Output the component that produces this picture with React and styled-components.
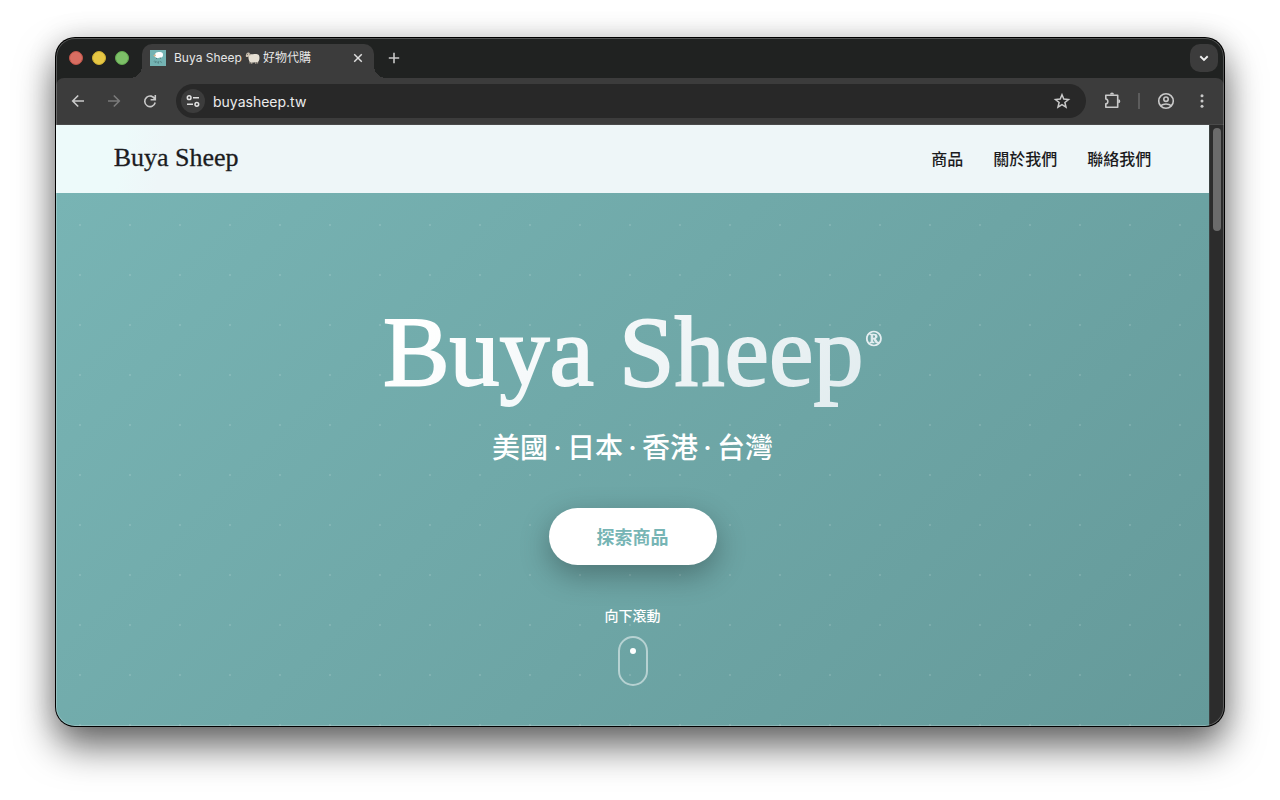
import React from "react";
import styled, { createGlobalStyle } from "styled-components";

const GlobalStyle = createGlobalStyle`
  *, *::before, *::after { box-sizing: border-box; }
  body {
    margin: 0;
    background: #fff;
    font-family: Inter, "Noto Sans CJK TC", sans-serif;
  }
  button, input { font: inherit; color: inherit; border: 0; background: none; padding: 0; margin: 0; }
  a { color: inherit; text-decoration: none; }
`;

const Desktop = styled.div`
  min-height: 100vh;
  padding: 38px 56px 74px;
  display: flex;
`;

const Window = styled.div`
  flex: 1;
  min-width: 0;
  display: flex;
  flex-direction: column;
  position: relative;
  overflow: hidden;
  border-radius: 19px;
  background: #202221;
  box-shadow: 0 0 0 1px #000, 0 20px 38px rgba(0, 0, 0, 0.6), 0 0 30px rgba(0, 0, 0, 0.14);

  &::after {
    content: "";
    position: absolute;
    inset: 0;
    border-radius: inherit;
    box-shadow: inset 0 0 0 1px rgba(255, 255, 255, 0.24);
    pointer-events: none;
  }
`;

const TabStrip = styled.div`
  height: 40px;
  display: flex;
  align-items: flex-end;
  padding: 0 6px 0 13px;
  flex: none;
`;

const TrafficLights = styled.div`
  display: flex;
  gap: 9px;
  height: 40px;
  align-items: center;
`;

const Light = styled.button`
  width: 14px;
  height: 14px;
  border-radius: 50%;
  background: ${(p) => p.$fill};
  border: 1px solid ${(p) => p.$edge};
`;

const Tab = styled.div`
  position: relative;
  width: 232px;
  height: 34px;
  margin-left: 13px;
  padding: 0 8px;
  display: flex;
  align-items: center;
  border-radius: 10px 10px 0 0;
  background: #3c3c3c;
  color: #e6e6e6;
  font-size: 12px;
  padding-bottom: 6px;

  &::before, &::after {
    content: "";
    position: absolute;
    bottom: 0;
    width: 12px;
    height: 12px;
  }
  &::before { left: -12px; background: radial-gradient(circle at 0 0, transparent 12px, #3c3c3c 12px); }
  &::after { right: -12px; background: radial-gradient(circle at 100% 0, transparent 12px, #3c3c3c 12px); }
`;

const TabTitle = styled.span`
  flex: 1;
  margin-left: 8px;
  display: flex;
  align-items: center;
  gap: 3px;
  white-space: nowrap;
  line-height: 16px;
`;

const IconButton = styled.button`
  flex: none;
  width: ${(p) => p.$size || 20}px;
  height: ${(p) => p.$size || 20}px;
  display: grid;
  place-items: center;
  color: ${(p) => p.$tone || "#c9c9c9"};
  background: ${(p) => p.$bg || "none"};
  border-radius: ${(p) => p.$radius || "50%"};
  svg { display: block; }
`;

const NewTab = styled.div`
  height: 40px;
  display: flex;
  align-items: center;
  margin-left: 10px;
  flex: 1;
`;

const TabMenu = styled.div`
  height: 40px;
  display: flex;
  align-items: center;
`;

const Toolbar = styled.div`
  height: 47px;
  flex: none;
  display: flex;
  align-items: center;
  padding: 0 12px;
  border-radius: 8px 8px 0 0;
  background: #3c3c3c;
  border-bottom: 1px solid #4a4a4a;
`;

const HistoryControls = styled.div`
  display: flex;
  gap: 16px;
`;

const Omnibox = styled.label`
  flex: 1;
  height: 34px;
  margin-left: 16px;
  padding: 0 14px 0 5px;
  display: flex;
  align-items: center;
  border-radius: 17px;
  background: #282828;
  color: #ececec;
`;

const Address = styled.input`
  flex: 1;
  min-width: 0;
  margin-left: 8px;
  height: 20px;
  font-size: 14px;
  outline: 0;
`;

const Actions = styled.div`
  display: flex;
  align-items: center;
  gap: 16px;
  margin-left: 16px;
`;

const Divider = styled.span`
  width: 2px;
  height: 16px;
  background: #5c5c5c;
`;

const Viewport = styled.div`
  flex: 1;
  display: flex;
`;

const Page = styled.div`
  flex: 1;
  min-width: 0;
  display: flex;
  flex-direction: column;
`;

const ScrollTrack = styled.div`
  width: 15px;
  padding: 3px 3px 0;
  background: #2c2c2c;
  border-left: 1px solid #3c4242;
`;

const ScrollThumb = styled.div`
  height: 103px;
  width: 8px;
  border-radius: 4px;
  background: #6b6b6b;
`;

const SiteHeader = styled.header`
  height: 68px;
  flex: none;
  padding: 0 5% 2px;
  display: flex;
  align-items: center;
  justify-content: space-between;
  background: linear-gradient(100deg, #edfafa 0, #edfafa 70px, #eef6f8 110px);
  color: #1c1c1e;
`;

const Brand = styled.a`
  font-family: "Liberation Serif", serif;
  font-size: 26px;
  line-height: 32px;
  -webkit-text-stroke: 0.3px currentColor;
`;

const SiteNav = styled.nav`
  display: flex;
  gap: 30px;
  padding-top: 2px;
  font-size: 16px;
  line-height: 24px;
  font-weight: 500;
`;

const Hero = styled.main`
  flex: 1;
  padding: 100px 24px 39px;
  display: flex;
  flex-direction: column;
  align-items: center;
  color: #fff;
  background:
    radial-gradient(circle, rgba(255, 255, 255, 0.12) 1px, transparent 1px) -1px 7px / 50px 50px,
    linear-gradient(135deg, #78b4b4 0%, #659a9a 100%);
`;

const HeroTitle = styled.h1`
  margin: 0;
  display: flex;
  align-items: flex-start;
  gap: 2px;
  font-family: "Liberation Serif", serif;
  font-weight: 400;
  font-size: 100px;
  line-height: 118px;
  white-space: nowrap;
  color: transparent;
  background: linear-gradient(135deg, #ffffff 10%, #e0ebee 100%);
  -webkit-background-clip: text;
  background-clip: text;
  -webkit-text-stroke: 2px transparent;
`;

const Registered = styled.span`
  margin-top: 34px;
  font-size: 22px;
  line-height: 24px;
  -webkit-text-stroke: 1px transparent;
`;

const Regions = styled.p`
  margin: 17px 0 40px;
  display: flex;
  font-size: 28px;
  line-height: 40px;
  font-weight: 500;
`;

const Dot = styled.span`
  width: 19px;
  display: flex;
  justify-content: center;
  white-space: pre;
`;

const ExploreButton = styled.button`
  height: 57px;
  padding: 0 48px 2px;
  border-radius: 29px;
  background: #fff;
  color: #77b5b5;
  font-size: 18px;
  font-weight: 700;
  box-shadow: 0 10px 30px rgba(0, 0, 0, 0.3);
`;

const ScrollHint = styled.a`
  margin-top: 41px;
  display: flex;
  flex-direction: column;
  align-items: center;
  gap: 10px;
  font-size: 14px;
  line-height: 20px;
  font-weight: 500;
`;

const Mouse = styled.span`
  width: 30px;
  height: 50px;
  padding-top: 10px;
  display: flex;
  justify-content: center;
  border: 2px solid rgba(255, 255, 255, 0.5);
  border-radius: 15px;
`;

const Wheel = styled.span`
  width: 6px;
  height: 6px;
  border-radius: 50%;
  background: #fff;
`;

const Icon = ({ size = 20, w = 1.6, children }) => (
  <svg width={size} height={size} viewBox="0 0 20 20" fill="none" stroke="currentColor" strokeWidth={w} aria-hidden="true">
    {children}
  </svg>
);

const Favicon = () => (
  <svg width="16" height="16" viewBox="0 0 16 16" aria-hidden="true">
    <rect width="16" height="16" fill="#74b3b3" />
    <path d="M5 4.2C5.6 2.2 8 1.6 9.500 2.100c2-.3 3.700 1 3.500 2.600.2 1.900-1.300 3-3 2.900-1.400.7-3 .6-4-.2C4.800 7.200 4.300 5.500 5 4.200Z" fill="#fff" />
    <path d="M3.300 5.200 5.500 4.300 6 6l-1.700.8Z" fill="#d9b48d" />
    <path d="M6.500 8v1M10.500 7.800v1" stroke="#4b6667" strokeWidth=".7" />
    <path d="M4 11.500c1-1.500 2 .2 1 1 1.200-.2 1.500-1 2-.6.500.6 1.500.4 1.800-.4l-.6 2.300M10 12c.8-.7 1.700-.4 1.500.7" fill="none" stroke="#4b7778" strokeWidth=".7" />
  </svg>
);

const SheepIcon = () => (
  <svg width="15" height="14" viewBox="0 0 15 14" role="img" aria-label="ewe">
    <path d="M5 8.500v4M6.800 9v4M10.800 9v4M12.600 8.500v4" stroke="#aaa092" strokeWidth="1.100" />
    <path d="M3.600 4.200C5 2.700 7 3.600 8 3.300c2-.7 4.700-.4 5.700.7 1.200 1.400.9 5-.1 6.300-1 1.300-2.500.7-3.500 1-1.700.4-3.900.5-5-.4C3.500 9.600 3.200 6.400 3.600 4.200Z" fill="#e5dfd3" />
    <path d="M.8 4.400C1.200 2.800 2 1.500 3.300 1.500c1.400 0 2.200 1.200 2 2.500-.4 1.300-1.600 1.500-2.500 1.700-.9.500-2.200.2-2-1.300Z" fill="#cfc5b6" />
    <path d="M3.800 2.500 5.300 3.600" stroke="#8f8172" />
    <circle cx="2.300" cy="3.300" r=".5" fill="#3b3632" />
  </svg>
);

export default function App() {
  return (
    <>
      <GlobalStyle />
      <Desktop>
        <Window>
          <TabStrip>
            <TrafficLights>
              <Light aria-label="Close window" $fill="#d86e62" $edge="#c05449" />
              <Light aria-label="Minimise window" $fill="#e6c744" $edge="#cdae32" />
              <Light aria-label="Zoom window" $fill="#7dc068" $edge="#62a84f" />
            </TrafficLights>
            <Tab>
              <Favicon />
              <TabTitle>
                <span>Buya Sheep</span>
                <SheepIcon />
                <span>好物代購</span>
              </TabTitle>
              <IconButton aria-label="Close tab" $size={16} $tone="#e0e0e0">
                <Icon size={16} w={1.8}><path d="m5.300 5.300 9.400 9.400m0-9.400-9.400 9.400" /></Icon>
              </IconButton>
            </Tab>
            <NewTab>
              <IconButton aria-label="New tab">
                <Icon><path d="M10 4.800v10.400M4.800 10h10.400" /></Icon>
              </IconButton>
            </NewTab>
            <TabMenu>
              <IconButton aria-label="Search tabs" $size={28} $bg="#3c3c3c" $radius="10px" $tone="#f0f0f0">
                <Icon w={1.900}><path d="m6.300 8.300 3.700 3.600 3.700-3.600" /></Icon>
              </IconButton>
            </TabMenu>
          </TabStrip>

          <Toolbar>
            <HistoryControls>
              <IconButton aria-label="Back"><Icon><path d="M16 10H4.800M10.200 4.500 4.700 10l5.500 5.500" /></Icon></IconButton>
              <IconButton aria-label="Forward" $tone="#7a7a7a"><Icon><path d="M4 10h11.200M9.800 4.500l5.500 5.500-5.500 5.500" /></Icon></IconButton>
              <IconButton aria-label="Reload">
                <Icon><path d="M14.900 8.200A5.300 5.300 0 1 0 15.200 11.500M15.300 4v4.700h-4.700" /></Icon>
              </IconButton>
            </HistoryControls>
            <Omnibox>
              <IconButton aria-label="Site information" $size={24} $bg="#3c3c3c" $tone="#e0e0e0">
                <Icon size={16} w={1.900}>
                  <circle cx="5.200" cy="5.800" r="2.300" />
                  <path d="M10 5.800h7.500M2.500 14.200H10" />
                  <circle cx="14.800" cy="14.200" r="2.300" />
                </Icon>
              </IconButton>
              <Address aria-label="Address" defaultValue="buyasheep.tw" />
              <IconButton aria-label="Bookmark this page">
                <Icon w={1.500}><path d="m10 3.800 1.800 4.300 4.700.4-3.600 3 1.100 4.600-4-2.500-4 2.500 1.100-4.600-3.600-3 4.700-.4Z" /></Icon>
              </IconButton>
            </Omnibox>
            <Actions>
              <IconButton aria-label="Extensions">
                <Icon w={1.600}>
                  <path d="M3.800 4.200h11.900v12.100H3.800v-3.400c2.700-.4 2.700-4.500 0-4.900Z" strokeLinejoin="round" />
                  <path d="M8 3.600a2 2.100 0 0 1 4 0ZM16.300 8.300a2 2 0 0 1 0 4Z" fill="currentColor" stroke="none" />
                </Icon>
              </IconButton>
              <Divider />
              <IconButton aria-label="Profile">
                <Icon w={1.600}>
                  <circle cx="10" cy="10" r="7.300" />
                  <circle cx="10" cy="8.200" r="2.200" />
                  <path d="M4.800 14.700c2.800-2.300 7.600-2.300 10.400 0" />
                </Icon>
              </IconButton>
              <IconButton aria-label="Browser menu">
                <Icon>
                  <g fill="currentColor" stroke="none">
                    <circle cx="10" cy="4.800" r="1.500" /><circle cx="10" cy="10" r="1.500" /><circle cx="10" cy="15.200" r="1.500" />
                  </g>
                </Icon>
              </IconButton>
            </Actions>
          </Toolbar>

          <Viewport>
            <Page>
              <SiteHeader>
                <Brand href="#home">Buya Sheep</Brand>
                <SiteNav>
                  <a href="#products">商品</a>
                  <a href="#about">關於我們</a>
                  <a href="#contact">聯絡我們</a>
                </SiteNav>
              </SiteHeader>
              <Hero>
                <HeroTitle>Buya Sheep<Registered>®</Registered></HeroTitle>
                <Regions>
                  美國<Dot> · </Dot>日本<Dot> · </Dot>香港<Dot> · </Dot>台灣
                </Regions>
                <ExploreButton>探索商品</ExploreButton>
                <ScrollHint href="#products">
                  向下滾動
                  <Mouse><Wheel /></Mouse>
                </ScrollHint>
              </Hero>
            </Page>
            <ScrollTrack><ScrollThumb /></ScrollTrack>
          </Viewport>
        </Window>
      </Desktop>
    </>
  );
}
